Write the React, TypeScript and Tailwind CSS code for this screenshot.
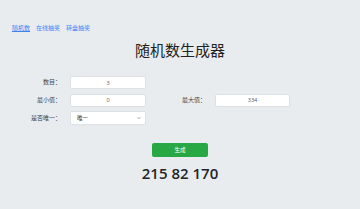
const LINKS = ["随机数", "在线抽奖", "转盘抽奖"];

export default function App() {
  return (
    <div className="h-[209px] w-full overflow-hidden bg-[#e9ecef] pt-[24px] font-['Open_Sans','Noto_Sans_CJK_SC',sans-serif] text-[#333]">
      <nav className="flex gap-[6px] px-[12px] text-[6px] leading-[8px] text-[#3b82f6]">
        {LINKS.map((link, i) => (
          <a key={link} href="#" className={i === 0 ? "underline" : ""}>
            {link}
          </a>
        ))}
      </nav>

      <h1 className="mt-[8px] text-center text-[15px] leading-[20px] font-normal text-[#222]">随机数生成器</h1>

      <form className="mt-[16px] flex flex-col gap-[4.5px] text-[6px] text-[#444]">
        <div className="flex h-[13px] items-center">
          <label className="w-[61px] text-right">数目：</label>
          <input
            defaultValue="3"
            className="ml-[9px] h-[13px] w-[76px] rounded-[2px] border border-[#dde1e5] bg-white text-center text-[5.5px] text-[#555] outline-none"
          />
        </div>
        <div className="flex h-[13px] items-center">
          <label className="w-[61px] text-right">最小值：</label>
          <input
            defaultValue="0"
            className="ml-[9px] h-[13px] w-[76px] rounded-[2px] border border-[#dde1e5] bg-white text-center text-[5.5px] text-[#555] outline-none"
          />
          <label className="w-[60px] text-right">最大值：</label>
          <input
            defaultValue="334"
            className="ml-[9px] h-[13px] w-[75px] rounded-[2px] border border-[#dde1e5] bg-white text-center text-[5.5px] text-[#555] outline-none"
          />
        </div>
        <div className="flex h-[14px] items-center">
          <label className="w-[61px] text-right">是否唯一：</label>
          <div className="relative ml-[9px] flex h-[14px] w-[76px] items-center rounded-[2px] border border-[#dde1e5] bg-white pl-[6px] text-[5.5px] text-[#333]">
            <span>唯一</span>
            <svg
              viewBox="0 0 10 10"
              className="absolute right-[4px] top-1/2 h-[4px] w-[4px] -translate-y-1/2"
              fill="none"
              stroke="#555"
              strokeWidth="1.6"
            >
              <path d="M2 3.5l3 3 3-3" />
            </svg>
          </div>
        </div>
      </form>

      <div className="mt-[18px] flex justify-center">
        <button
          type="button"
          className="h-[14px] w-[56px] rounded-[2px] bg-[#28a745] text-[5.5px] text-white"
        >
          生成
        </button>
      </div>

      <div className="mt-[6px] text-center text-[15px] leading-[20px] font-semibold text-[#212529]">215 82 170</div>
    </div>
  );
}
